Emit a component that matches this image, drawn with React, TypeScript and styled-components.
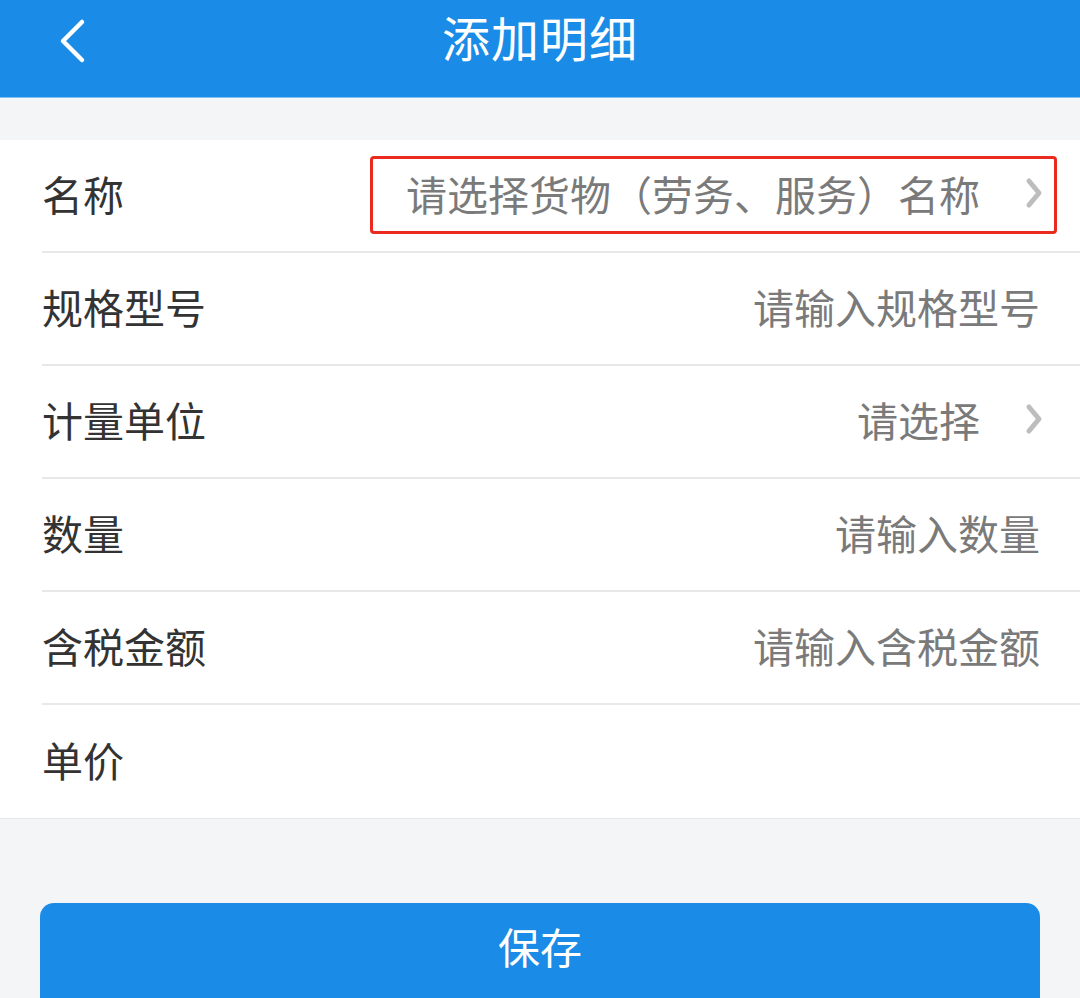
import React from 'react';
import styled, { createGlobalStyle } from 'styled-components';

const GlobalStyle = createGlobalStyle`
  html, body {
    margin: 0;
    padding: 0;
    background: #f4f5f6;
    font-family: 'Noto Sans CJK SC', 'Noto Sans', sans-serif;
  }
`;

const Page = styled.div`
  width: 1080px;
  height: 998px;
  overflow: hidden;
  background: #f4f5f6;
`;

const Header = styled.header`
  position: relative;
  height: 97px;
  background: #1a8be6;
  display: flex;
  align-items: center;
  justify-content: center;
  border-bottom: 1px solid #7cc4f5;
`;

const BackButton = styled.button`
  position: absolute;
  left: 48px;
  top: 14px;
  width: 48px;
  height: 54px;
  padding: 0;
  border: none;
  background: none;
  display: flex;
  align-items: center;
  justify-content: center;
`;

const Title = styled.h1`
  margin: 0 0 26px;
  font-size: 48px;
  font-weight: 400;
  color: #fff;
  letter-spacing: 1px;
`;

const Form = styled.div`
  margin-top: 42px;
  background: #fff;
  border-bottom: 1px solid #e6e6e6;
`;

const Row = styled.div<{ $last?: boolean }>`
  position: relative;
  height: 113px;
  margin-left: 42px;
  padding: 0 40px 6px 0;
  display: flex;
  align-items: center;
  justify-content: space-between;
  border-bottom: ${(p) => (p.$last ? 'none' : '2px solid #e8e8e8')};
  box-sizing: border-box;
`;

const Label = styled.span`
  font-size: 41px;
  color: #333;
`;

const Value = styled.span<{ $arrow?: boolean }>`
  display: flex;
  align-items: center;
  gap: 44px;
  margin-right: ${(p) => (p.$arrow ? '-4px' : '0')};
  font-size: 41px;
  color: #7a7a7a;
`;

const Highlight = styled.div`
  position: absolute;
  left: 328px;
  right: 23px;
  top: 16px;
  height: 78px;
  border: 3px solid #ea2a1f;
  border-radius: 4px;
  box-sizing: border-box;
  pointer-events: none;
`;

const Footer = styled.div`
  padding: 84px 40px 0;
`;

const SaveButton = styled.button`
  width: 1000px;
  height: 110px;
  border: none;
  border-radius: 14px;
  background: #1a8be6;
  color: #fff;
  font-family: inherit;
  font-size: 42px;
  display: flex;
  justify-content: center;
  padding-top: 12px;
  box-sizing: border-box;
`;

const Chevron = () => (
  <svg width="20" height="34" viewBox="0 0 20 34">
    <path d="M5 5 L15 17 L5 29" fill="none" stroke="#bdbdbd" strokeWidth="5" strokeLinecap="round" strokeLinejoin="round" />
  </svg>
);

const rows = [
  { label: '名称', value: '请选择货物（劳务、服务）名称', arrow: true, mark: true },
  { label: '规格型号', value: '请输入规格型号' },
  { label: '计量单位', value: '请选择', arrow: true },
  { label: '数量', value: '请输入数量' },
  { label: '含税金额', value: '请输入含税金额' },
  { label: '单价', value: '' },
];

const App = () => {
  return (
    <Page>
      <GlobalStyle />
      <Header>
        <BackButton>
          <svg width="30" height="46" viewBox="0 0 30 46">
            <path d="M25 4 L6 23 L25 42" fill="none" stroke="#fff" strokeWidth="4.5" strokeLinecap="round" strokeLinejoin="round" />
          </svg>
        </BackButton>
        <Title>添加明细</Title>
      </Header>
      <Form>
        {rows.map((r, i) => (
          <Row key={r.label} $last={i === rows.length - 1}>
            <Label>{r.label}</Label>
            <Value $arrow={r.arrow}>
              {r.value}
              {r.arrow && <Chevron />}
            </Value>
            {r.mark && <Highlight />}
          </Row>
        ))}
      </Form>
      <Footer>
        <SaveButton>保存</SaveButton>
      </Footer>
    </Page>
  );
};

export default App;
